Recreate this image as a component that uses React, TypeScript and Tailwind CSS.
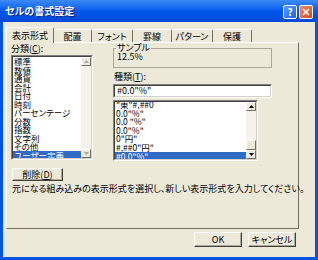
import React from 'react';

const categories = ['標準', '数値', '通貨', '会計', '日付', '時刻', 'パーセンテージ', '分数', '指数', '文字列', 'その他', 'ユーザー定義'];
const formats = ['"東"#,##0', '0.0"%"', '0.0 "%"', '0.0"%"', '0"円"', '#,##0"円"', '#0.0"%"'];
const tabs = [
  { label: '表示形式', w: 'w-[48px]' },
  { label: '配置', w: 'w-[38px]' },
  { label: 'フォント', w: 'w-[41px]' },
  { label: '罫線', w: 'w-[39px]' },
  { label: 'パターン', w: 'w-[41px]' },
  { label: '保護', w: 'w-[39px]' },
];

function Tri({ up, color }: { up?: boolean; color: string }) {
  return (
    <svg width="5" height="3" viewBox="0 0 5 3">
      <path d={up ? 'M2.5 0L5 3H0z' : 'M0 0h5L2.5 3z'} fill={color} />
    </svg>
  );
}

function ArrowBtn({ up, color }: { up?: boolean; color: string }) {
  return (
    <div className="h-[9px] flex items-center justify-center bg-[#ECE9D8] border border-t-white border-l-white border-r-[#716F64] border-b-[#716F64]">
      <Tri up={up} color={color} />
    </div>
  );
}

function Sunken({ className, children }: { className: string; children: React.ReactNode }) {
  return (
    <div className={`border border-t-[#808080] border-l-[#808080] border-r-white border-b-white ${className}`}>
      <div className="h-full border border-t-[#404040] border-l-[#404040] border-r-[#D4D0C8] border-b-[#D4D0C8] bg-white">
        {children}
      </div>
    </div>
  );
}

function Button({ className, children }: { className: string; children: React.ReactNode }) {
  return (
    <div className={`flex items-center justify-center bg-[#ECE9D8] border border-t-white border-l-white border-r-[#404040] border-b-[#404040] shadow-[inset_-1px_-1px_0_#ACA899] text-[9px] leading-none ${className}`}>
      {children}
    </div>
  );
}

export default function App() {
  return (
    <div className="w-[318px] h-[260px] flex flex-col bg-[#0054E3] font-['Noto_Sans_CJK_JP',sans-serif] [font-feature-settings:'palt'] text-black overflow-hidden">
      {/* Title bar */}
      <div className="h-[22px] flex items-center pl-[5px] pr-[5px] bg-gradient-to-b from-[#3B8CF5] via-[#0058EE] to-[#0049D6]">
        <span className="flex-1 text-white font-bold text-[10px] leading-none [text-shadow:1px_1px_0_#0A1F8A]">セルの書式設定</span>
        <div className="flex gap-[2px] pt-[1px]">
          <div className="w-[14px] h-[14px] rounded-[2px] border border-white bg-gradient-to-br from-[#5C9BFF] to-[#1F5FE0] flex items-center justify-center text-white font-bold text-[10px] leading-none">?</div>
          <div className="w-[14px] h-[14px] rounded-[2px] border border-white bg-gradient-to-br from-[#F08A63] to-[#D6461E] flex items-center justify-center">
            <svg width="8" height="8" viewBox="0 0 8 8">
              <path d="M1 1L7 7M7 1L1 7" stroke="#fff" strokeWidth="1.6" />
            </svg>
          </div>
        </div>
      </div>

      {/* Dialog body */}
      <div className="flex-1 mx-[3px] mb-[3px] bg-[#ECE9D8] flex flex-col pl-[3px] pr-[16px]">
        {/* Tabs */}
        <div className="mt-[5px] h-[15px] flex items-end">
          {tabs.map((t, i) =>
            i === 0 ? (
              <div
                key={t.label}
                className={`${t.w} h-[16px] -mb-[1px] relative z-10 bg-[#ECE9D8] border-t border-l border-r border-t-white border-l-white border-r-[#716F64] rounded-t-[2px] flex items-center justify-center text-[9px] leading-none pb-[1px]`}
              >
                {t.label}
              </div>
            ) : (
              <div
                key={t.label}
                className={`${t.w} h-[13px] border-t border-r border-t-white border-r-[#716F64] rounded-tr-[2px] flex items-center justify-center text-[9px] leading-none`}
              >
                {t.label}
              </div>
            )
          )}
        </div>

        {/* Tab panel */}
        <div className="h-[187px] w-[293px] border border-t-white border-l-white border-r-[#716F64] border-b-[#716F64] flex flex-col pl-[4px]">
          <div className="flex gap-[20px]">
            {/* Category column */}
            <div className="w-[82px] flex flex-col">
              <div className="h-[11px] text-[9px] leading-[11px]">
                分類(<span className="underline">C</span>):
              </div>
              <Sunken className="mt-[1px] h-[105px] w-[82px]">
                <div className="flex h-full">
                  <div className="flex-1 overflow-hidden text-[8.5px]">
                    {categories.map((c) => (
                      <div
                        key={c}
                        className={`h-[8.5px] leading-[8.5px] pl-[1px] whitespace-nowrap ${c === 'ユーザー定義' ? 'bg-[#316AC5] text-white' : ''}`}
                      >
                        {c}
                      </div>
                    ))}
                  </div>
                  <div className="w-[10px] flex flex-col bg-[#F4F2EA]">
                    <ArrowBtn up color="#A7A69C" />
                    <div className="flex-1" />
                    <ArrowBtn color="#A7A69C" />
                  </div>
                </div>
              </Sunken>
            </div>

            {/* Format column */}
            <div className="w-[159px] flex flex-col">
              <fieldset className="h-[25px] border border-[#ACA899] px-[2px]">
                <legend className="text-[9px] leading-[10px] px-[1px]">サンプル</legend>
                <div className="text-[9px] leading-[10px] pl-[1px] -mt-[1px]">12.5%</div>
              </fieldset>
              <div className="mt-[4px] h-[10px] text-[9px] leading-[10px] pl-[1px]">
                種類(<span className="underline">T</span>):
              </div>
              <Sunken className="mt-[2px] h-[14px] w-[159px]">
                <div className="text-[9px] leading-[10px] pl-[2px]">#0.0"%"</div>
              </Sunken>
              <Sunken className="mt-[2px] h-[61px] w-[145px]">
                <div className="flex h-full">
                  <div className="flex-1 overflow-hidden text-[8.5px]">
                    <div className="-mt-[2px]">
                      {formats.map((f, i) => (
                        <div
                          key={i}
                          className={`h-[8.6px] leading-[8.6px] pl-[1px] whitespace-nowrap ${i === formats.length - 1 ? 'bg-[#316AC5] text-white' : ''}`}
                        >
                          {f}
                        </div>
                      ))}
                    </div>
                  </div>
                  <div className="w-[10px] flex flex-col bg-[#F4F2EA]">
                    <ArrowBtn up color="#000" />
                    <div className="flex-1" />
                    <div className="h-[10px] bg-[#ECE9D8] border border-t-white border-l-white border-r-[#716F64] border-b-[#716F64]" />
                    <ArrowBtn color="#000" />
                  </div>
                </div>
              </Sunken>
            </div>
          </div>

          <Button className="mt-[7px] ml-[1px] w-[51px] h-[13px]">
            削除(<span className="underline">D</span>)
          </Button>
          <div className="mt-[3px] ml-[1px] text-[9px] leading-[10px] whitespace-nowrap">
            元になる組み込みの表示形式を選択し、新しい表示形式を入力してください。
          </div>
        </div>

        {/* Footer buttons */}
        <div className="mt-[3px] flex justify-end gap-[6px] pr-[3px]">
          <Button className="w-[48px] h-[15px]">OK</Button>
          <Button className="w-[48px] h-[15px]">キャンセル</Button>
        </div>
      </div>
    </div>
  );
}
